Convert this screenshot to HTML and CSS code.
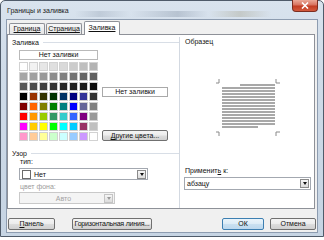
FILE: index.html
```html
<!DOCTYPE html>
<html lang="ru">
  <head>
    <meta charset="UTF-8" />
    <title>Границы и заливка</title>
    <link rel="stylesheet" href="styles.css">
  </head>
  <body>
    <div class="window">
      <div class="titlebar">
        <span class="title">Границы и заливка</span>
        <span class="close">
          <svg width="8" height="7" viewBox="0 0 8 7">
            <path d="M1 0.5 L7 6.5 M7 0.5 L1 6.5" stroke="#fff" stroke-width="1.6" />
          </svg>
        </span>
      </div>

      <div class="client">
        <div class="tabs">
          <span class="tab"><u>Граница</u></span>
          <span class="tab"><u>Страница</u></span>
          <span class="tab active"><u>Заливка</u></span>
        </div>

        <div class="panel">
          <div class="left">
            <div class="heading">
              <span>Заливка</span>
              <i class="rule"></i>
            </div>

            <div class="fill">
              <div class="palette">
                <div class="nofill">Нет заливки</div>
                <div class="grid"></div>
              </div>
              <div class="side">
                <div class="current">Нет заливки</div>
                <button class="btn more"><u>Д</u>ругие цвета...</button>
              </div>
            </div>

            <div class="heading pattern">
              <span>Узор</span>
              <i class="rule"></i>
            </div>
            <div class="label">тип:</div>
            <div class="combo type">
              <span class="swatch"></span>
              <span class="val">Нет</span>
              <span class="arrow"></span>
            </div>
            <div class="label dim">цвет фона:</div>
            <div class="combo bg disabled">
              <span class="val">Авто</span>
              <span class="arrow"></span>
            </div>
          </div>

          <div class="right">
            <div class="caption">Образец</div>
            <svg class="preview" width="134" height="95" viewBox="0 0 134 95">
              <g stroke="#8a8a8a" stroke-width="1" fill="none">
                <path d="M39 33 V37 H36 M96 33 V37 H100" />
                <path d="M36 86 H39 V90 M100 86 H96 V90" />
              </g>
              <g class="text-lines" stroke="#8c8c8c" stroke-width="1.4"></g>
            </svg>
            <div class="caption apply">Применит<u>ь</u> к:</div>
            <div class="combo to">
              <span class="val">абзацу</span>
              <span class="arrow"></span>
            </div>
          </div>
        </div>

        <div class="buttons">
          <button class="btn panel-btn"><u>П</u>анель</button>
          <button class="btn line-btn">Горизонтальная линия...</button>
          <span class="spacer"></span>
          <button class="btn ok">ОК</button>
          <button class="btn cancel">Отмена</button>
        </div>
      </div>
    </div>

    <script>
      // палитра заливки Word: серые оттенки и 40 цветов
      const colors = [
        "#ffffff", "#f2f2f2", "#e6e6e6", "#dfdfdf", "#d9d9d9", "#cccccc", "#bfbfbf", "#b3b3b3",
        "#a6a6a6", "#a0a0a0", "#999999", "#8c8c8c", "#808080", "#737373", "#666666", "#606060",
        "#595959", "#4d4d4d", "#404040", "#333333", "#262626", "#202020", "#1a1a1a", "#0d0d0d",
        "#000000", "#993300", "#333300", "#003300", "#003366", "#000080", "#333399", "#333333",
        "#800000", "#ff6600", "#808000", "#008000", "#008080", "#0000ff", "#666699", "#808080",
        "#ff0000", "#ff9900", "#99cc00", "#339966", "#33cccc", "#3366ff", "#800080", "#999999",
        "#ff00ff", "#ffcc00", "#ffff00", "#00ff00", "#00ffff", "#00ccff", "#993366", "#c0c0c0",
        "#ff99cc", "#ffcc99", "#ffff99", "#ccffcc", "#ccffff", "#99ccff", "#cc99ff", "#ffffff"
      ];

      const grid = document.querySelector(".grid");
      colors.forEach((c) => {
        const cell = document.createElement("span");
        cell.className = "cell";
        cell.style.background = c;
        grid.appendChild(cell);
      });

      // строки образца абзаца
      const lines = document.querySelector(".text-lines");
      let d = "M60 39 H95";
      for (let i = 0; i < 13; i++) {
        const y = 42 + i * 3;
        d += ` M42 ${y} H95`;
      }
      d += " M42 81 H78";
      const path = document.createElementNS("http://www.w3.org/2000/svg", "path");
      path.setAttribute("d", d);
      lines.appendChild(path);
    </script>
  </body>
</html>
```

FILE: styles.css
```css
body {
  margin: 0;
  width: 324px;
  height: 240px;
  overflow: hidden;
  background: #ffffff;
  font-family: "Liberation Sans", Arial, sans-serif;
  font-size: 7px;
  color: #111;
}

button {
  font-family: inherit;
  font-size: 7px;
  color: #111;
  padding: 0;
  white-space: nowrap;
}

.window {
  box-sizing: border-box;
  width: 324px;
  height: 237px;
  border: 1px solid #4f5b6a;
  border-radius: 5px 5px 0 0;
  padding: 0 5px 3px 5px;
  display: flex;
  flex-direction: column;
  background: linear-gradient(180deg, #d9e3ee 0%, #cfdbe8 30%, #c6d4e3 100%);
}

.titlebar {
  height: 18px;
  display: flex;
  justify-content: space-between;
  align-items: flex-start;
  background: linear-gradient(90deg, transparent 0%, transparent 22%, rgba(120, 135, 155, 0.25) 30%, transparent 40%,
      rgba(110, 125, 145, 0.3) 55%, transparent 65%, rgba(140, 130, 90, 0.25) 75%, transparent 85%);
  background-size: 100% 6px;
  background-position: 0 10px;
  background-repeat: no-repeat;
}

.title {
  margin-top: 6px;
  padding-left: 1px;
  color: #1b1b1b;
}

.close {
  box-sizing: border-box;
  width: 26px;
  height: 12px;
  margin-top: -1px;
  border: 1px solid #7c2d20;
  border-top: none;
  border-radius: 0 0 4px 4px;
  background: linear-gradient(180deg, #eba998 0%, #d8735f 45%, #c23d24 55%, #d35a3d 100%);
  display: flex;
  align-items: center;
  justify-content: center;
}

.client {
  flex: 1;
  display: flex;
  flex-direction: column;
  border: 1px solid #8d9cb0;
  background: #f0f0f0;
}

/* вкладки */
.tabs {
  display: flex;
  align-items: flex-end;
  height: 14px;
  padding-left: 2px;
}

.tab {
  box-sizing: border-box;
  width: 36px;
  height: 11px;
  margin-right: 1px;
  border: 1px solid #8e9198;
  border-bottom: none;
  border-radius: 2px 2px 0 0;
  background: linear-gradient(180deg, #f7f7f7 0%, #e4e4e4 100%);
  text-align: center;
  line-height: 10px;
}

.tab.active {
  width: 36px;
  height: 14px;
  margin-left: 1px;
  margin-bottom: -1px;
  background: #ffffff;
  position: relative;
  z-index: 1;
  line-height: 12px;
}

.panel {
  box-sizing: border-box;
  height: 175px;
  margin-right: 2px;
  border: 1px solid #8e9198;
  background: #ffffff;
  display: flex;
}

.left {
  width: 171px;
  display: flex;
  flex-direction: column;
}

.heading {
  display: flex;
  align-items: center;
  height: 8px;
  margin-top: 3px;
  padding-left: 4px;
}

.rule {
  flex: 1;
  height: 1px;
  margin-left: 4px;
  background: #d8dee6;
}

.fill {
  display: flex;
  margin-top: 4px;
  padding-left: 11px;
}

.palette {
  width: 79px;
}

.nofill {
  box-sizing: border-box;
  height: 10px;
  border: 1px solid #b9b9b9;
  text-align: center;
  line-height: 8px;
}

.grid {
  margin-top: 2px;
  display: grid;
  grid-template-columns: repeat(8, 9px);
  grid-auto-rows: 9px;
  gap: 1px;
}

.cell {
  box-sizing: border-box;
  border: 1px solid #d2d2d2;
}

.side {
  width: 66px;
  margin-left: 4px;
  display: flex;
  flex-direction: column;
}

.current {
  box-sizing: border-box;
  height: 10px;
  margin-top: 37px;
  border: 1px solid #a9a9a9;
  text-align: center;
  line-height: 8px;
}

.btn {
  box-sizing: border-box;
  height: 12px;
  border: 1px solid #707070;
  border-radius: 2px;
  background: linear-gradient(180deg, #f4f4f4 0%, #ececec 48%, #dddddd 52%, #d0d0d0 100%);
  line-height: 10px;
}

.more {
  height: 11px;
  margin-top: auto;
}

.heading.pattern {
  margin-top: 8px;
}

.label {
  height: 8px;
  margin-top: 1px;
  padding-left: 12px;
  line-height: 8px;
}

.label.dim {
  margin-top: 3px;
  color: #9a9a9a;
}

.combo {
  box-sizing: border-box;
  display: flex;
  align-items: center;
  height: 12px;
  border: 1px solid #a3a8b0;
  background: #ffffff;
}

.combo.type {
  width: 129px;
  margin: 2px 0 0 11px;
}

.combo.bg {
  width: 96px;
  margin: 1px 0 0 11px;
}

.swatch {
  box-sizing: border-box;
  width: 9px;
  height: 9px;
  margin-left: 2px;
  border: 1px solid #6b6b6b;
  background: #ffffff;
}

.val {
  flex: 1;
  padding-left: 3px;
}

.combo.disabled {
  border-color: #c9c9c9;
  background: #f4f4f4;
  color: #a3a3a3;
}

.combo.disabled .val {
  text-align: center;
}

.arrow {
  box-sizing: border-box;
  width: 9px;
  height: 9px;
  margin-right: 1px;
  border: 1px solid #8b8b8b;
  background: linear-gradient(180deg, #f6f6f6 0%, #dcdcdc 100%);
  display: flex;
  align-items: center;
  justify-content: center;
}

.arrow::after {
  content: "";
  border-left: 2.5px solid transparent;
  border-right: 2.5px solid transparent;
  border-top: 3px solid #111;
}

.disabled .arrow {
  border-color: #c4c4c4;
}

.disabled .arrow::after {
  border-top-color: #9a9a9a;
}

/* образец */
.right {
  flex: 1;
  margin-top: 2px;
  border-left: 1px solid #d3d9e1;
  display: flex;
  flex-direction: column;
}

.caption {
  height: 8px;
  margin-top: 1px;
  padding-left: 5px;
  line-height: 8px;
}

.preview {
  display: block;
}

.caption.apply {
  margin-top: 26px;
}

.combo.to {
  width: 127px;
  height: 13px;
  margin: 2px 0 0 4px;
}

.combo.to .val {
  padding-left: 2px;
}

/* кнопки внизу */
.buttons {
  display: flex;
  margin-top: 9px;
  padding: 0 1px;
}

.panel-btn {
  width: 47px;
}

.line-btn {
  width: 80px;
  margin-left: 17px;
  letter-spacing: -0.2px;
}

.spacer {
  flex: 1;
}

.ok {
  width: 42px;
  border-color: #3c7fb1;
  background: linear-gradient(180deg, #eaf4fb 0%, #dcecf7 48%, #c9e0f1 52%, #bcd8ee 100%);
}

.cancel {
  width: 46px;
  margin-left: 6px;
}
```
